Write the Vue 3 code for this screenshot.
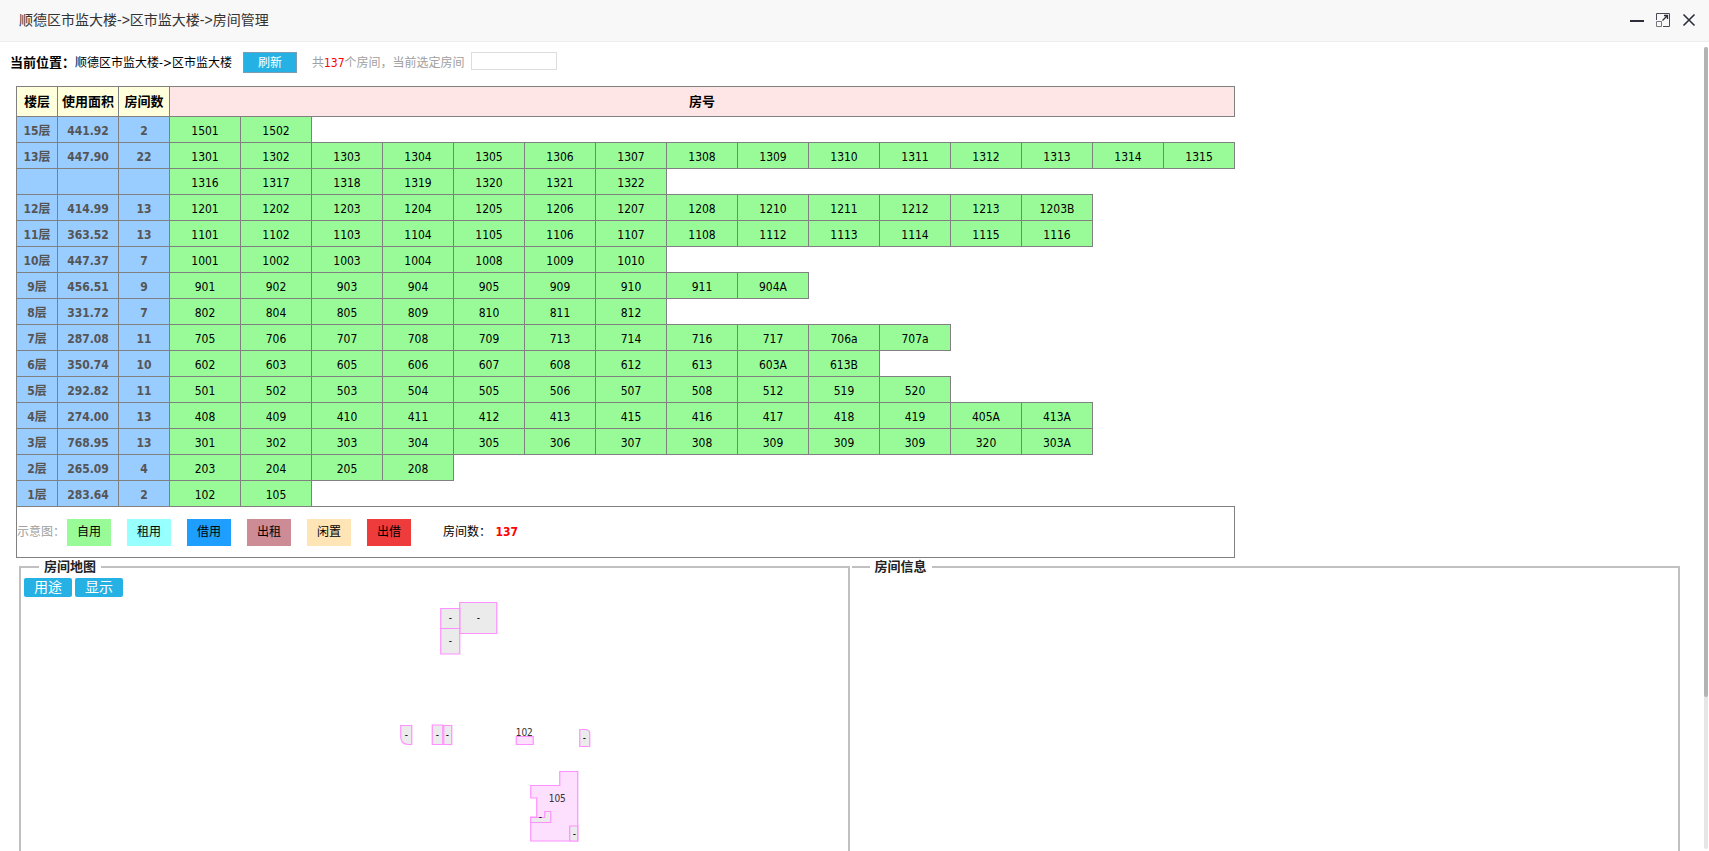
<script setup>
const floors = [
  { name: '15层', area: '441.92', count: '2', rooms: ['1501', '1502'] },
  { name: '13层', area: '447.90', count: '22', rooms: ['1301', '1302', '1303', '1304', '1305', '1306', '1307', '1308', '1309', '1310', '1311', '1312', '1313', '1314', '1315'] },
  { name: '', area: '', count: '', rooms: ['1316', '1317', '1318', '1319', '1320', '1321', '1322'] },
  { name: '12层', area: '414.99', count: '13', rooms: ['1201', '1202', '1203', '1204', '1205', '1206', '1207', '1208', '1210', '1211', '1212', '1213', '1203B'] },
  { name: '11层', area: '363.52', count: '13', rooms: ['1101', '1102', '1103', '1104', '1105', '1106', '1107', '1108', '1112', '1113', '1114', '1115', '1116'] },
  { name: '10层', area: '447.37', count: '7', rooms: ['1001', '1002', '1003', '1004', '1008', '1009', '1010'] },
  { name: '9层', area: '456.51', count: '9', rooms: ['901', '902', '903', '904', '905', '909', '910', '911', '904A'] },
  { name: '8层', area: '331.72', count: '7', rooms: ['802', '804', '805', '809', '810', '811', '812'] },
  { name: '7层', area: '287.08', count: '11', rooms: ['705', '706', '707', '708', '709', '713', '714', '716', '717', '706a', '707a'] },
  { name: '6层', area: '350.74', count: '10', rooms: ['602', '603', '605', '606', '607', '608', '612', '613', '603A', '613B'] },
  { name: '5层', area: '292.82', count: '11', rooms: ['501', '502', '503', '504', '505', '506', '507', '508', '512', '519', '520'] },
  { name: '4层', area: '274.00', count: '13', rooms: ['408', '409', '410', '411', '412', '413', '415', '416', '417', '418', '419', '405A', '413A'] },
  { name: '3层', area: '768.95', count: '13', rooms: ['301', '302', '303', '304', '305', '306', '307', '308', '309', '309', '309', '320', '303A'] },
  { name: '2层', area: '265.09', count: '4', rooms: ['203', '204', '205', '208'] },
  { name: '1层', area: '283.64', count: '2', rooms: ['102', '105'] },
]

const uses = [
  { label: '自用', kind: 'own' },
  { label: '租用', kind: 'rented' },
  { label: '借用', kind: 'borrowed' },
  { label: '出租', kind: 'let' },
  { label: '闲置', kind: 'idle' },
  { label: '出借', kind: 'lent' },
]

const dashes = [[70, 32], [98, 32], [70, 55], [26, 149], [57, 149], [67, 149], [204, 152], [160, 231], [194, 248]]
</script>

<template>
  <div class="window">
    <header class="titlebar">
      <h1>顺德区市监大楼-&gt;区市监大楼-&gt;房间管理</h1>
      <div class="controls">
        <button type="button" aria-label="最小化">
          <svg width="14" height="14" viewBox="0 0 14 14"><path d="M0 8h14" stroke="#2e2d3c" stroke-width="2" /></svg>
        </button>
        <button type="button" aria-label="还原">
          <svg width="14" height="14" viewBox="0 0 14 14" fill="none" stroke="#4a4955">
            <path d="M.5 7V.5h13v13H7" />
            <path d="M.5 8.500h5v5h-5z" stroke="#77767f" />
            <path d="M6.500 7.500l5-5M8 2.500h3.500V6" stroke="#2e2d3c" stroke-width="1.300" />
          </svg>
        </button>
        <button type="button" aria-label="关闭">
          <svg width="14" height="14" viewBox="0 0 14 14"><path d="M1.500 1.500l11 11M12.500 1.500l-11 11" stroke="#2e2d3c" stroke-width="1.600" /></svg>
        </button>
      </div>
    </header>

    <main class="content">
      <div class="toolbar">
        <strong>当前位置：</strong>
        <span>顺德区市监大楼-&gt;区市监大楼</span>
        <button type="button" class="refresh">刷新</button>
        <label for="room" class="summary">共<em>137</em>个房间，当前选定房间</label>
        <input id="room" type="text" />
      </div>

      <table class="rooms">
        <colgroup>
          <col class="c-floor" /><col class="c-area" /><col class="c-count" />
          <col v-for="n in 15" :key="n" class="c-room" />
        </colgroup>
        <thead>
          <tr>
            <th>楼层</th><th>使用面积</th><th>房间数</th>
            <th colspan="15" class="numbers">房号</th>
          </tr>
        </thead>
        <tbody>
          <tr v-for="(f, i) in floors" :key="i">
            <td class="floor">{{ f.name }}</td>
            <td class="floor">{{ f.area }}</td>
            <td class="floor">{{ f.count }}</td>
            <td v-for="(r, j) in f.rooms" :key="j" class="room">{{ r }}</td>
          </tr>
        </tbody>
        <tfoot>
          <tr>
            <td colspan="18">
              <div class="key">
                <span class="key-title">示意图：</span>
                <span v-for="u in uses" :key="u.kind" class="swatch" :class="u.kind">{{ u.label }}</span>
                <span class="total">房间数： <b>137</b></span>
              </div>
            </td>
          </tr>
        </tfoot>
      </table>

      <div class="panels">
        <fieldset>
          <legend>房间地图</legend>
          <div class="map-tools">
            <button type="button">用途</button>
            <button type="button">显示</button>
          </div>
          <svg class="map" viewBox="-359 8 826 300">
            <g class="plain">
              <path d="M79.500 13.500h37v31h-37z" />
              <path d="M60.500 19.500h19v20h-19z" />
              <path d="M60.500 39.500h19v25.500h-19z" />
              <path d="M20.500 136.500h11v19h-3.500q-7.500-.5-7.500-7.500z" />
              <path d="M52 136h10.500v19.500H52z" />
              <path d="M63.500 136.500h8v19h-8z" />
              <path d="M199.500 140.500h6q4 .5 4 4v13h-10z" />
            </g>
            <g class="used">
              <path d="M136 147.500h17v8h-17z" />
              <path d="M150.500 196.500h29v-14h18v69.500h-47v-24h6v-19h-6z" />
            </g>
            <g class="plain">
              <path d="M150.500 228.500h14v-6h6v11h-20z" />
              <path d="M189.500 237h8v15h-8z" />
            </g>
            <text x="144" y="147">102</text>
            <text x="177" y="213">105</text>
            <text v-for="(d, i) in dashes" :key="i" :x="d[0]" :y="d[1]" class="dash">-</text>
          </svg>
        </fieldset>
        <fieldset class="info">
          <legend>房间信息</legend>
        </fieldset>
      </div>
    </main>
    <div class="scroll"><div class="thumb"></div></div>
  </div>
</template>

<style>
body { margin: 0; background: #fff; }
</style>

<style scoped>
.window {
  position: relative;
  height: 100vh;
  overflow: hidden;
  display: flex;
  flex-direction: column;
  font: 12px/16px "DejaVu Sans Condensed", "Noto Sans CJK SC", sans-serif;
  color: #000;
}
button { font: inherit; padding: 0; margin: 0; cursor: pointer; }
.titlebar {
  flex: none;
  box-sizing: border-box;
  height: 42px;
  padding: 0 13px 1px 19px;
  display: flex;
  align-items: center;
  justify-content: space-between;
  background: #f8f8f8;
  border-bottom: 1px solid #eee;
}
.titlebar h1 {
  margin: 0;
  font: 14px/20px "Liberation Sans", "Noto Sans CJK SC", sans-serif;
  color: #333;
}
.controls { display: flex; gap: 12px; }
.controls button { border: 0; background: none; width: 14px; height: 14px; }
.controls svg { display: block; }
.content { flex: 1; min-height: 0; overflow: hidden; padding: 9px 29px 0 10px; }
.toolbar { display: flex; align-items: center; height: 23px; white-space: nowrap; }
.toolbar strong { font-size: 13px; }
.refresh {
  width: 54px;
  height: 21px;
  margin: 0 15px 0 11px;
  line-height: 16px;
  color: #fff;
  background: #25b1e4;
  border: 1px solid #7c9cb4;
}
.summary { color: #a0a0a0; }
.summary em { color: #f00; font-style: normal; }
.toolbar input {
  box-sizing: border-box;
  width: 86px;
  height: 18px;
  margin: 0 0 3px 6px;
  border: 1px solid #ddd;
  background: #fff;
}
.rooms {
  width: 1219px;
  margin: 12px 0 0 6px;
  table-layout: fixed;
  border-collapse: collapse;
  text-align: center;
}
.c-floor { width: 41px; }
.c-area { width: 61px; }
.c-count { width: 51px; }
.c-room { width: 71px; }
th, td { box-sizing: border-box; padding: 0; border: 1px solid #808080; white-space: nowrap; }
th { height: 30px; font-size: 13px; background: #ffffdc; }
.numbers { background: #ffe6e6; }
tbody td { height: 26px; padding-top: 2px; }
.floor { background: #99ccff; color: #555; font-weight: bold; }
.room { background: #98fb98; }
tfoot td { height: 51px; }
.key { display: flex; align-items: center; height: 50px; }
.key-title { width: 50px; text-align: left; color: #a0a0a0; }
.swatch { width: 44px; line-height: 27px; margin-right: 16px; }
.own { background: #98fb98; }
.rented { background: #98ffff; }
.borrowed { background: #1e9fff; }
.let { background: #cc8b95; }
.idle { background: #ffe4b5; }
.lent { background: #ee3b3b; }
.total { margin-left: 16px; }
.total b { color: #f00; margin-left: 1px; }
.panels { display: flex; gap: 2px; margin-left: 9px; }
fieldset {
  flex: 1 1 0;
  min-width: 0;
  box-sizing: border-box;
  margin: 0;
  padding: 0;
  border: 2px solid #c0c0c0;
}
.info { border-left: 0; }
legend { margin-left: 18px; padding: 0 5px; font-size: 13px; line-height: 18px; font-weight: bold; color: #222; }
.map-tools { display: flex; gap: 3px; padding: 2px 3px 0; }
.map-tools button {
  width: 48px;
  height: 19px;
  border: 0;
  border-radius: 2px;
  background: #25b1e4;
  color: #fff;
  font-size: 14px;
  line-height: 19px;
}
.map { display: block; width: 100%; height: 300px; }
.map path { stroke: #ff90ff; stroke-width: 1.2; }
.plain path { fill: #ebebeb; }
.used path { fill: #fde0fd; }
.map text { font-size: 10px; text-anchor: middle; fill: #333; }
.map .dash { fill: #000; }
.scroll {
  position: absolute;
  top: 47px;
  right: 1px;
  bottom: 2px;
  width: 4px;
  border-radius: 2px;
  background: #e6e6e6;
}
.thumb { height: 81%; border-radius: 2px; background: #b3b3b3; }
</style>
